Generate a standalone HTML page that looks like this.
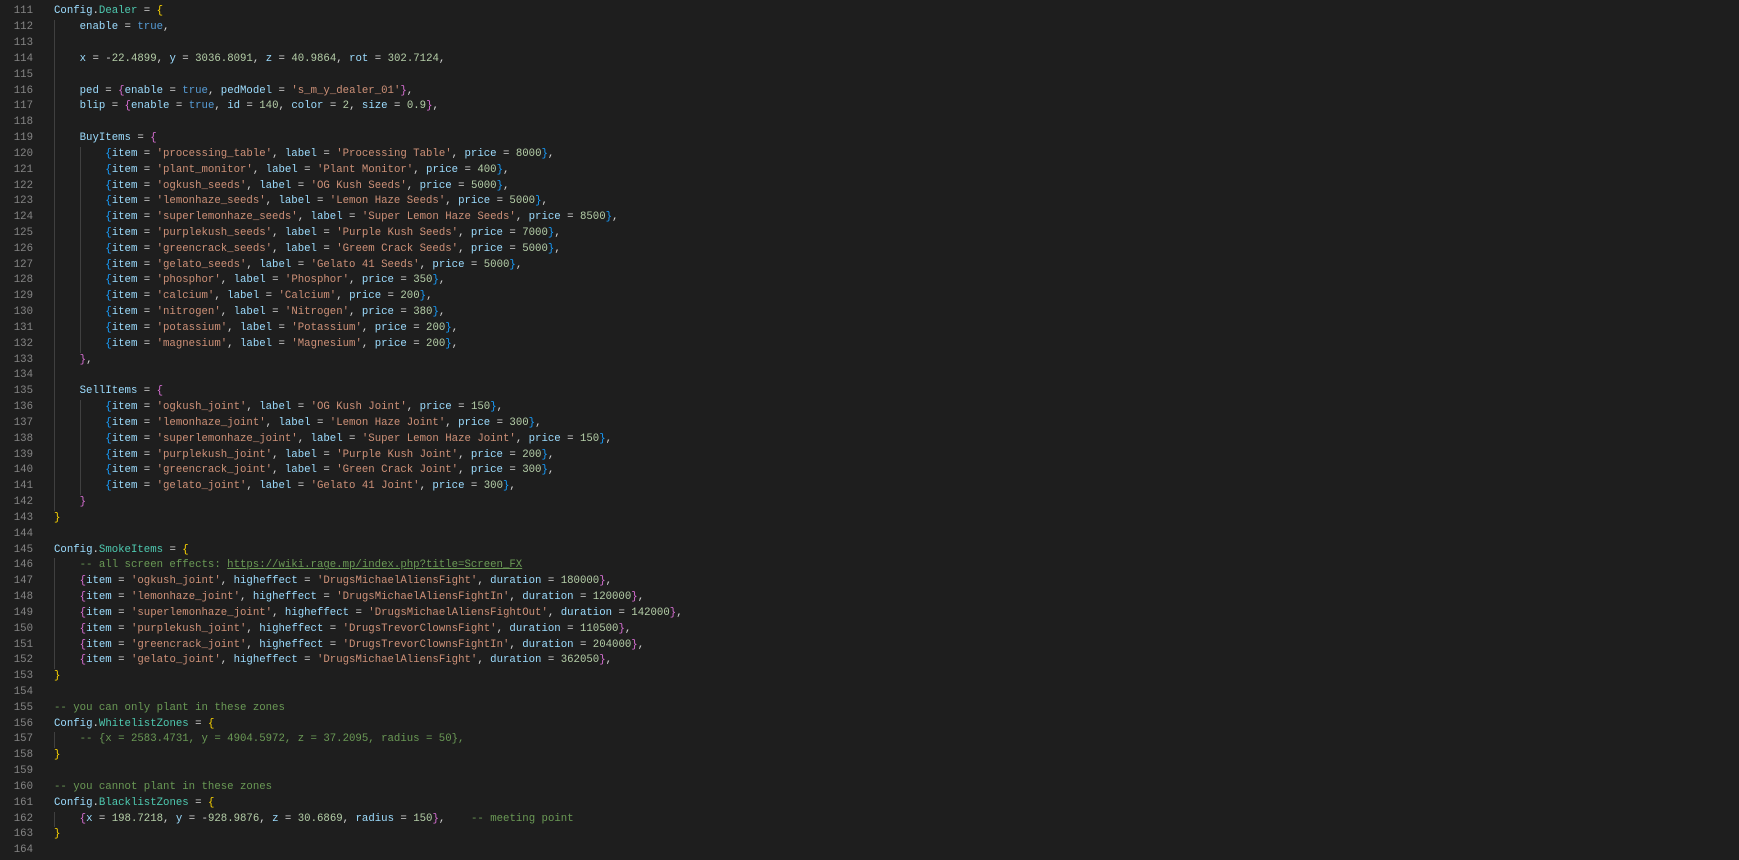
<!DOCTYPE html>
<html><head><meta charset="utf-8"><style>
html,body{margin:0;padding:0;background:#1e1e1e;width:1739px;height:860px;overflow:hidden}
#w{position:absolute;top:4.4px;left:0;font-family:"Liberation Mono",monospace;font-size:10.7px;line-height:15.83px;color:#d4d4d4}
.l{height:15.83px;white-space:pre;position:relative}
.n{position:absolute;left:0;width:33px;text-align:right;color:#858585}
.c0{position:absolute;left:54px}
i{font-style:normal;display:inline-block;width:4ch;height:15.83px;vertical-align:top;border-left:1px solid #404040;box-sizing:border-box}
.v{color:#9cdcfe}.t{color:#4ec9b0}.s{color:#ce9178}.m{color:#b5cea8}.k{color:#569cd6}.c{color:#6a9955}
.a{color:#ffd700}.b{color:#da70d6}.d{color:#179fff}
u{text-decoration:underline}
</style></head><body><div id="w">
<div class="l"><span class="n">111</span><span class="c0"><span class="v">Config</span>.<span class="t">Dealer</span> = <span class="a">{</span></span></div>
<div class="l"><span class="n">112</span><span class="c0"><i></i><span class="v">enable</span> = <span class="k">true</span>,</span></div>
<div class="l"><span class="n">113</span><span class="c0"><i></i></span></div>
<div class="l"><span class="n">114</span><span class="c0"><i></i><span class="v">x</span> = -<span class="m">22.4899</span>, <span class="v">y</span> = <span class="m">3036.8091</span>, <span class="v">z</span> = <span class="m">40.9864</span>, <span class="v">rot</span> = <span class="m">302.7124</span>,</span></div>
<div class="l"><span class="n">115</span><span class="c0"><i></i></span></div>
<div class="l"><span class="n">116</span><span class="c0"><i></i><span class="v">ped</span> = <span class="b">{</span><span class="v">enable</span> = <span class="k">true</span>, <span class="v">pedModel</span> = <span class="s">'s_m_y_dealer_01'</span><span class="b">}</span>,</span></div>
<div class="l"><span class="n">117</span><span class="c0"><i></i><span class="v">blip</span> = <span class="b">{</span><span class="v">enable</span> = <span class="k">true</span>, <span class="v">id</span> = <span class="m">140</span>, <span class="v">color</span> = <span class="m">2</span>, <span class="v">size</span> = <span class="m">0.9</span><span class="b">}</span>,</span></div>
<div class="l"><span class="n">118</span><span class="c0"><i></i></span></div>
<div class="l"><span class="n">119</span><span class="c0"><i></i><span class="v">BuyItems</span> = <span class="b">{</span></span></div>
<div class="l"><span class="n">120</span><span class="c0"><i></i><i></i><span class="d">{</span><span class="v">item</span> = <span class="s">'processing_table'</span>, <span class="v">label</span> = <span class="s">'Processing Table'</span>, <span class="v">price</span> = <span class="m">8000</span><span class="d">}</span>,</span></div>
<div class="l"><span class="n">121</span><span class="c0"><i></i><i></i><span class="d">{</span><span class="v">item</span> = <span class="s">'plant_monitor'</span>, <span class="v">label</span> = <span class="s">'Plant Monitor'</span>, <span class="v">price</span> = <span class="m">400</span><span class="d">}</span>,</span></div>
<div class="l"><span class="n">122</span><span class="c0"><i></i><i></i><span class="d">{</span><span class="v">item</span> = <span class="s">'ogkush_seeds'</span>, <span class="v">label</span> = <span class="s">'OG Kush Seeds'</span>, <span class="v">price</span> = <span class="m">5000</span><span class="d">}</span>,</span></div>
<div class="l"><span class="n">123</span><span class="c0"><i></i><i></i><span class="d">{</span><span class="v">item</span> = <span class="s">'lemonhaze_seeds'</span>, <span class="v">label</span> = <span class="s">'Lemon Haze Seeds'</span>, <span class="v">price</span> = <span class="m">5000</span><span class="d">}</span>,</span></div>
<div class="l"><span class="n">124</span><span class="c0"><i></i><i></i><span class="d">{</span><span class="v">item</span> = <span class="s">'superlemonhaze_seeds'</span>, <span class="v">label</span> = <span class="s">'Super Lemon Haze Seeds'</span>, <span class="v">price</span> = <span class="m">8500</span><span class="d">}</span>,</span></div>
<div class="l"><span class="n">125</span><span class="c0"><i></i><i></i><span class="d">{</span><span class="v">item</span> = <span class="s">'purplekush_seeds'</span>, <span class="v">label</span> = <span class="s">'Purple Kush Seeds'</span>, <span class="v">price</span> = <span class="m">7000</span><span class="d">}</span>,</span></div>
<div class="l"><span class="n">126</span><span class="c0"><i></i><i></i><span class="d">{</span><span class="v">item</span> = <span class="s">'greencrack_seeds'</span>, <span class="v">label</span> = <span class="s">'Greem Crack Seeds'</span>, <span class="v">price</span> = <span class="m">5000</span><span class="d">}</span>,</span></div>
<div class="l"><span class="n">127</span><span class="c0"><i></i><i></i><span class="d">{</span><span class="v">item</span> = <span class="s">'gelato_seeds'</span>, <span class="v">label</span> = <span class="s">'Gelato 41 Seeds'</span>, <span class="v">price</span> = <span class="m">5000</span><span class="d">}</span>,</span></div>
<div class="l"><span class="n">128</span><span class="c0"><i></i><i></i><span class="d">{</span><span class="v">item</span> = <span class="s">'phosphor'</span>, <span class="v">label</span> = <span class="s">'Phosphor'</span>, <span class="v">price</span> = <span class="m">350</span><span class="d">}</span>,</span></div>
<div class="l"><span class="n">129</span><span class="c0"><i></i><i></i><span class="d">{</span><span class="v">item</span> = <span class="s">'calcium'</span>, <span class="v">label</span> = <span class="s">'Calcium'</span>, <span class="v">price</span> = <span class="m">200</span><span class="d">}</span>,</span></div>
<div class="l"><span class="n">130</span><span class="c0"><i></i><i></i><span class="d">{</span><span class="v">item</span> = <span class="s">'nitrogen'</span>, <span class="v">label</span> = <span class="s">'Nitrogen'</span>, <span class="v">price</span> = <span class="m">380</span><span class="d">}</span>,</span></div>
<div class="l"><span class="n">131</span><span class="c0"><i></i><i></i><span class="d">{</span><span class="v">item</span> = <span class="s">'potassium'</span>, <span class="v">label</span> = <span class="s">'Potassium'</span>, <span class="v">price</span> = <span class="m">200</span><span class="d">}</span>,</span></div>
<div class="l"><span class="n">132</span><span class="c0"><i></i><i></i><span class="d">{</span><span class="v">item</span> = <span class="s">'magnesium'</span>, <span class="v">label</span> = <span class="s">'Magnesium'</span>, <span class="v">price</span> = <span class="m">200</span><span class="d">}</span>,</span></div>
<div class="l"><span class="n">133</span><span class="c0"><i></i><span class="b">}</span>,</span></div>
<div class="l"><span class="n">134</span><span class="c0"><i></i></span></div>
<div class="l"><span class="n">135</span><span class="c0"><i></i><span class="v">SellItems</span> = <span class="b">{</span></span></div>
<div class="l"><span class="n">136</span><span class="c0"><i></i><i></i><span class="d">{</span><span class="v">item</span> = <span class="s">'ogkush_joint'</span>, <span class="v">label</span> = <span class="s">'OG Kush Joint'</span>, <span class="v">price</span> = <span class="m">150</span><span class="d">}</span>,</span></div>
<div class="l"><span class="n">137</span><span class="c0"><i></i><i></i><span class="d">{</span><span class="v">item</span> = <span class="s">'lemonhaze_joint'</span>, <span class="v">label</span> = <span class="s">'Lemon Haze Joint'</span>, <span class="v">price</span> = <span class="m">300</span><span class="d">}</span>,</span></div>
<div class="l"><span class="n">138</span><span class="c0"><i></i><i></i><span class="d">{</span><span class="v">item</span> = <span class="s">'superlemonhaze_joint'</span>, <span class="v">label</span> = <span class="s">'Super Lemon Haze Joint'</span>, <span class="v">price</span> = <span class="m">150</span><span class="d">}</span>,</span></div>
<div class="l"><span class="n">139</span><span class="c0"><i></i><i></i><span class="d">{</span><span class="v">item</span> = <span class="s">'purplekush_joint'</span>, <span class="v">label</span> = <span class="s">'Purple Kush Joint'</span>, <span class="v">price</span> = <span class="m">200</span><span class="d">}</span>,</span></div>
<div class="l"><span class="n">140</span><span class="c0"><i></i><i></i><span class="d">{</span><span class="v">item</span> = <span class="s">'greencrack_joint'</span>, <span class="v">label</span> = <span class="s">'Green Crack Joint'</span>, <span class="v">price</span> = <span class="m">300</span><span class="d">}</span>,</span></div>
<div class="l"><span class="n">141</span><span class="c0"><i></i><i></i><span class="d">{</span><span class="v">item</span> = <span class="s">'gelato_joint'</span>, <span class="v">label</span> = <span class="s">'Gelato 41 Joint'</span>, <span class="v">price</span> = <span class="m">300</span><span class="d">}</span>,</span></div>
<div class="l"><span class="n">142</span><span class="c0"><i></i><span class="b">}</span></span></div>
<div class="l"><span class="n">143</span><span class="c0"><span class="a">}</span></span></div>
<div class="l"><span class="n">144</span></div>
<div class="l"><span class="n">145</span><span class="c0"><span class="v">Config</span>.<span class="t">SmokeItems</span> = <span class="a">{</span></span></div>
<div class="l"><span class="n">146</span><span class="c0"><i></i><span class="c">-- all screen effects: <u>https://wiki.rage.mp/index.php?title=Screen_FX</u></span></span></div>
<div class="l"><span class="n">147</span><span class="c0"><i></i><span class="b">{</span><span class="v">item</span> = <span class="s">'ogkush_joint'</span>, <span class="v">higheffect</span> = <span class="s">'DrugsMichaelAliensFight'</span>, <span class="v">duration</span> = <span class="m">180000</span><span class="b">}</span>,</span></div>
<div class="l"><span class="n">148</span><span class="c0"><i></i><span class="b">{</span><span class="v">item</span> = <span class="s">'lemonhaze_joint'</span>, <span class="v">higheffect</span> = <span class="s">'DrugsMichaelAliensFightIn'</span>, <span class="v">duration</span> = <span class="m">120000</span><span class="b">}</span>,</span></div>
<div class="l"><span class="n">149</span><span class="c0"><i></i><span class="b">{</span><span class="v">item</span> = <span class="s">'superlemonhaze_joint'</span>, <span class="v">higheffect</span> = <span class="s">'DrugsMichaelAliensFightOut'</span>, <span class="v">duration</span> = <span class="m">142000</span><span class="b">}</span>,</span></div>
<div class="l"><span class="n">150</span><span class="c0"><i></i><span class="b">{</span><span class="v">item</span> = <span class="s">'purplekush_joint'</span>, <span class="v">higheffect</span> = <span class="s">'DrugsTrevorClownsFight'</span>, <span class="v">duration</span> = <span class="m">110500</span><span class="b">}</span>,</span></div>
<div class="l"><span class="n">151</span><span class="c0"><i></i><span class="b">{</span><span class="v">item</span> = <span class="s">'greencrack_joint'</span>, <span class="v">higheffect</span> = <span class="s">'DrugsTrevorClownsFightIn'</span>, <span class="v">duration</span> = <span class="m">204000</span><span class="b">}</span>,</span></div>
<div class="l"><span class="n">152</span><span class="c0"><i></i><span class="b">{</span><span class="v">item</span> = <span class="s">'gelato_joint'</span>, <span class="v">higheffect</span> = <span class="s">'DrugsMichaelAliensFight'</span>, <span class="v">duration</span> = <span class="m">362050</span><span class="b">}</span>,</span></div>
<div class="l"><span class="n">153</span><span class="c0"><span class="a">}</span></span></div>
<div class="l"><span class="n">154</span></div>
<div class="l"><span class="n">155</span><span class="c0"><span class="c">-- you can only plant in these zones</span></span></div>
<div class="l"><span class="n">156</span><span class="c0"><span class="v">Config</span>.<span class="t">WhitelistZones</span> = <span class="a">{</span></span></div>
<div class="l"><span class="n">157</span><span class="c0"><i></i><span class="c">-- {x = 2583.4731, y = 4904.5972, z = 37.2095, radius = 50},</span></span></div>
<div class="l"><span class="n">158</span><span class="c0"><span class="a">}</span></span></div>
<div class="l"><span class="n">159</span></div>
<div class="l"><span class="n">160</span><span class="c0"><span class="c">-- you cannot plant in these zones</span></span></div>
<div class="l"><span class="n">161</span><span class="c0"><span class="v">Config</span>.<span class="t">BlacklistZones</span> = <span class="a">{</span></span></div>
<div class="l"><span class="n">162</span><span class="c0"><i></i><span class="b">{</span><span class="v">x</span> = <span class="m">198.7218</span>, <span class="v">y</span> = -<span class="m">928.9876</span>, <span class="v">z</span> = <span class="m">30.6869</span>, <span class="v">radius</span> = <span class="m">150</span><span class="b">}</span>,    <span class="c">-- meeting point</span></span></div>
<div class="l"><span class="n">163</span><span class="c0"><span class="a">}</span></span></div>
<div class="l"><span class="n">164</span></div>
</div></body></html>
